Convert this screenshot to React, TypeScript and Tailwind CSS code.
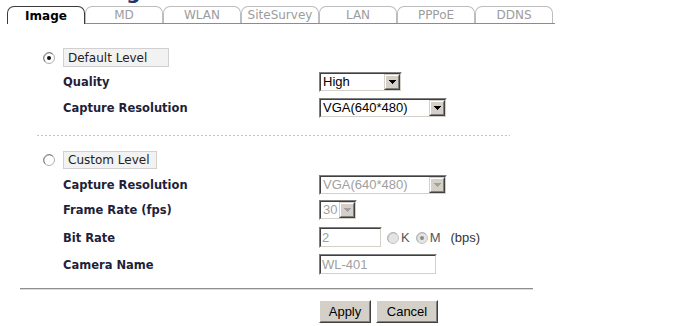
import React from "react";

function Arrow({ disabled }: { disabled?: boolean }) {
  const c = disabled ? "#a0a0a0" : "#000000";
  return (
    <svg width="7" height="4" viewBox="0 0 7 4" shapeRendering="crispEdges">
      <rect x="0" y="0" width="7" height="1" fill={c} />
      <rect x="1" y="1" width="5" height="1" fill={c} />
      <rect x="2" y="2" width="3" height="1" fill={c} />
      <rect x="3" y="3" width="1" height="1" fill={c} />
    </svg>
  );
}

function Select({ text, className, disabled }: { text: string; className: string; disabled?: boolean }) {
  return (
    <div className={`${className} flex border border-t-[#808080] border-l-[#808080] border-r-white border-b-white`}>
      <div className="flex flex-1 border border-t-[#404040] border-l-[#404040] border-r-[#d4d0c8] border-b-[#d4d0c8] bg-white">
        <span
          className={`flex-1 overflow-hidden whitespace-nowrap pl-[2px] text-[13px] leading-[16px] font-['Liberation_Sans',Arial,sans-serif] ${
            disabled ? "text-[#a0a0a0]" : "text-black"
          }`}
        >
          {text}
        </span>
        <div className="flex w-[16px] border border-t-[#d4d0c8] border-l-[#d4d0c8] border-r-[#404040] border-b-[#404040] bg-[#d4d0c8]">
          <div className="flex flex-1 items-center justify-center border border-t-white border-l-white border-r-[#808080] border-b-[#808080]">
            <Arrow disabled={disabled} />
          </div>
        </div>
      </div>
    </div>
  );
}

function Input({ text, className }: { text: string; className: string }) {
  return (
    <div className={`${className} flex border border-t-[#808080] border-l-[#808080] border-r-white border-b-white`}>
      <div className="flex flex-1 items-center border border-t-[#404040] border-l-[#404040] border-r-[#d4d0c8] border-b-[#d4d0c8] bg-white">
        <span className="pl-[1px] text-[13px] leading-[16px] text-[#a0a0a0] font-['Liberation_Sans',Arial,sans-serif]">
          {text}
        </span>
      </div>
    </div>
  );
}

function Radio({ checked, disabled }: { checked?: boolean; disabled?: boolean }) {
  return (
    <svg width="12" height="12" viewBox="0 0 12 12">
      <circle cx="6" cy="6" r="5.5" fill={disabled ? "#e4e4e4" : "#ffffff"} stroke={disabled ? "#c4c4c4" : "#b0b0b0"} />
      <path d="M2.2 9.8 A5.4 5.4 0 0 1 9.8 2.2" stroke={disabled ? "#b0b0b0" : "#7a7a7a"} strokeWidth="1" fill="none" />
      {checked && <circle cx="6" cy="6" r="2" fill={disabled ? "#8a8a8a" : "#111111"} />}
    </svg>
  );
}

function Button({ label, className }: { label: string; className: string }) {
  return (
    <div className={`${className} flex border border-t-white border-l-white border-r-[#404040] border-b-[#404040] bg-[#d4d0c8]`}>
      <div className="flex flex-1 items-center justify-center border border-t-[#d4d0c8] border-l-[#d4d0c8] border-r-[#808080] border-b-[#808080]">
        <span className="text-[13px] leading-[16px] text-black font-['Liberation_Sans',Arial,sans-serif]">{label}</span>
      </div>
    </div>
  );
}

function Label({ text }: { text: string }) {
  return (
    <div className="w-[256px] text-[11.5px] font-bold leading-[14px] text-[#1f1f3a]">{text}</div>
  );
}

const tabs = ["MD", "WLAN", "SiteSurvey", "LAN", "PPPoE", "DDNS"];

export default function App() {
  return (
    <div className="h-[326px] w-[690px] overflow-hidden bg-white font-['DejaVu_Sans',Verdana,sans-serif]">
      {/* cut-off heading */}
      <div className="h-[5px] overflow-hidden">
        <div className="-mt-[18px] ml-[58px] text-[20px] font-bold leading-[20px] text-[#22336a]">Setting</div>
      </div>

      {/* tabs */}
      <div className="ml-[7px] mt-[1px] flex h-[18px] w-[548px] border-b border-[#8c8c8c]">
        <div className="-mb-px flex h-[18px] w-[78px] items-center justify-center rounded-t-[7px] border border-b-0 border-[#3a3a3a] bg-white text-[12px] font-bold text-black">
          Image
        </div>
        {tabs.map((t) => (
          <div
            key={t}
            className="flex h-[17px] w-[78px] items-center justify-center rounded-t-[7px] border border-b-0 border-[#bdbdbd] text-[12px] text-[#9c9c9c]"
          >
            {t}
          </div>
        ))}
      </div>

      {/* Default level */}
      <div className="mt-[24px] flex h-[19px] items-center pl-[43px]">
        <Radio checked />
        <div className="ml-[8px] flex h-[19px] w-[106px] items-center border border-[#d0d0d0] bg-[#f2f2f2] pl-[4px] text-[12px] text-[#222]">
          Default Level
        </div>
      </div>

      <div className="mt-[5px] flex items-center pl-[63px]">
        <Label text="Quality" />
        <Select text="High" className="h-[20px] w-[83px]" />
      </div>

      <div className="mt-[6px] flex items-center pl-[63px]">
        <Label text="Capture Resolution" />
        <Select text="VGA(640*480)" className="h-[20px] w-[128px]" />
      </div>

      <div className="ml-[37px] mt-[17px] h-px w-[473px] bg-[repeating-linear-gradient(90deg,#c4c4c4_0_2px,transparent_2px_4px)]" />

      {/* Custom level */}
      <div className="mt-[15px] flex h-[18px] items-center pl-[43px]">
        <Radio />
        <div className="ml-[8px] flex h-[18px] w-[94px] items-center border border-[#d0d0d0] bg-[#f2f2f2] pl-[4px] text-[12px] text-[#222]">
          Custom Level
        </div>
      </div>

      <div className="mt-[6px] flex items-center pl-[63px]">
        <Label text="Capture Resolution" />
        <Select text="VGA(640*480)" className="h-[20px] w-[128px]" disabled />
      </div>

      <div className="mt-[5px] flex items-center pl-[63px]">
        <Label text="Frame Rate (fps)" />
        <Select text="30" className="h-[20px] w-[38px]" disabled />
      </div>

      <div className="mt-[7px] flex items-center pl-[63px]">
        <Label text="Bit Rate" />
        <Input text="2" className="h-[21px] w-[63px]" />
        <div className="ml-[5px] flex items-center font-['Liberation_Sans',Arial,sans-serif] text-[13px] text-[#555]">
          <Radio disabled />
          <span className="ml-[2px]">K</span>
          <span className="ml-[6px] flex">
            <Radio checked disabled />
          </span>
          <span className="ml-[2px]">M</span>
          <span className="ml-[10px] text-[#333]">(bps)</span>
        </div>
      </div>

      <div className="mt-[6px] flex items-center pl-[63px]">
        <Label text="Camera Name" />
        <Input text="WL-401" className="h-[21px] w-[118px]" />
      </div>

      <div className="ml-[20px] mt-[13px] h-[2px] w-[513px] border-t border-b border-t-[#8e8e8e] border-b-[#dcdcdc]" />

      <div className="mt-[10px] flex pl-[319px]">
        <Button label="Apply" className="h-[23px] w-[52px]" />
        <Button label="Cancel" className="ml-[5px] h-[23px] w-[62px]" />
      </div>
    </div>
  );
}
